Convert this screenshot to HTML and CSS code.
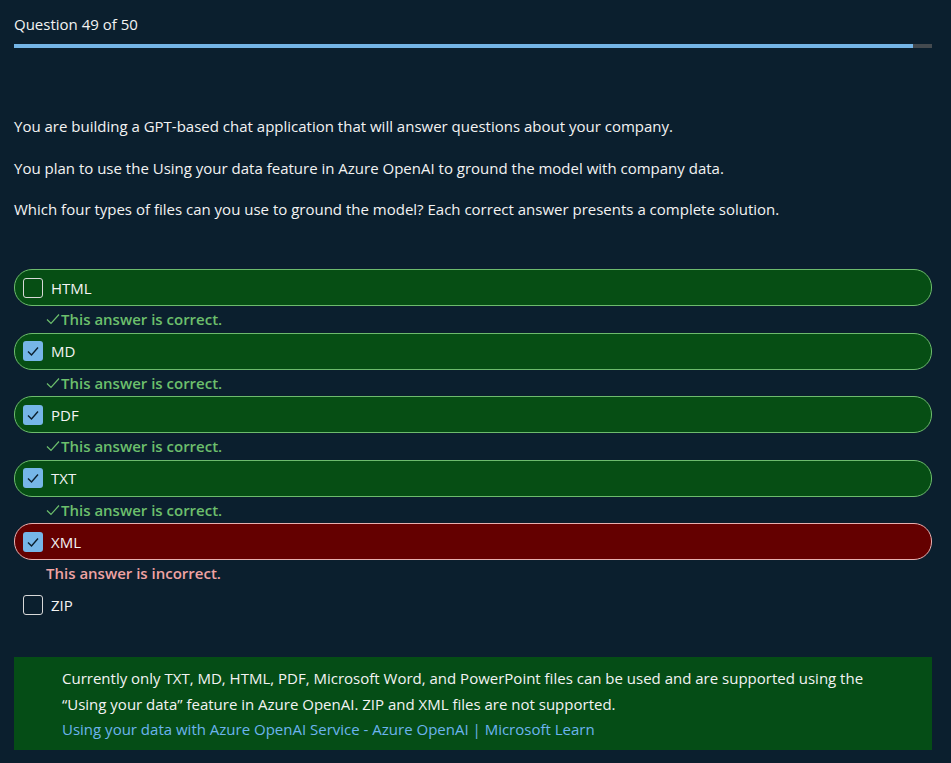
FILE: index.html
```html
<!DOCTYPE html>
<html lang="en">
<head>
<meta charset="utf-8">
<title>Question 49 of 50</title>
<link rel="stylesheet" href="styles.css">
</head>
<body>
<main class="quiz">
  <header class="head">
    <div class="counter">Question 49 of 50</div>
    <div class="progress"><div class="progress-fill" style="width:97.93%"></div></div>
  </header>

  <section class="question">
    <p>You are building a GPT-based chat application that will answer questions about your company.</p>
    <p>You plan to use the Using your data feature in Azure OpenAI to ground the model with company data.</p>
    <p>Which four types of files can you use to ground the model? Each correct answer presents a complete solution.</p>
  </section>

  <ul class="options">
    <li class="opt correct"><span class="box"></span><span class="label">HTML</span></li>
    <li class="fb ok"><svg class="tick" viewBox="0 0 14 12"><path d="M1 6.5 L5 10.5 L13 1.5" fill="none" stroke="currentColor" stroke-width="1.2"/></svg>This answer is correct.</li>
    <li class="opt correct"><span class="box checked"><svg viewBox="0 0 20 20"><path d="M5 10.5 L8.5 14 L15 6.5" fill="none" stroke="#0b1f2e" stroke-width="1.4"/></svg></span><span class="label">MD</span></li>
    <li class="fb ok"><svg class="tick" viewBox="0 0 14 12"><path d="M1 6.5 L5 10.5 L13 1.5" fill="none" stroke="currentColor" stroke-width="1.2"/></svg>This answer is correct.</li>
    <li class="opt correct"><span class="box checked"><svg viewBox="0 0 20 20"><path d="M5 10.5 L8.5 14 L15 6.5" fill="none" stroke="#0b1f2e" stroke-width="1.4"/></svg></span><span class="label">PDF</span></li>
    <li class="fb ok"><svg class="tick" viewBox="0 0 14 12"><path d="M1 6.5 L5 10.5 L13 1.5" fill="none" stroke="currentColor" stroke-width="1.2"/></svg>This answer is correct.</li>
    <li class="opt correct"><span class="box checked"><svg viewBox="0 0 20 20"><path d="M5 10.5 L8.5 14 L15 6.5" fill="none" stroke="#0b1f2e" stroke-width="1.4"/></svg></span><span class="label">TXT</span></li>
    <li class="fb ok"><svg class="tick" viewBox="0 0 14 12"><path d="M1 6.5 L5 10.5 L13 1.5" fill="none" stroke="currentColor" stroke-width="1.2"/></svg>This answer is correct.</li>
    <li class="opt wrong"><span class="box checked"><svg viewBox="0 0 20 20"><path d="M5 10.5 L8.5 14 L15 6.5" fill="none" stroke="#0b1f2e" stroke-width="1.4"/></svg></span><span class="label">XML</span></li>
    <li class="fb bad">This answer is incorrect.</li>
    <li class="opt plain"><span class="box"></span><span class="label">ZIP</span></li>
  </ul>

  <aside class="explain">
    <p>Currently only TXT, MD, HTML, PDF, Microsoft Word, and PowerPoint files can be used and are supported using the “Using your data” feature in Azure OpenAI. ZIP and XML files are not supported.</p>
    <a class="link" href="#">Using your data with Azure OpenAI Service - Azure OpenAI | Microsoft Learn</a>
  </aside>
</main>
</body>
</html>
```
FILE: styles.css
```css
html, body {
  margin: 0;
  padding: 0;
  background: #0b1f2e;
}
body {
  font-family: "Open Sans", "Noto Sans", "Liberation Sans", sans-serif;
  font-size: 15px;
  color: #f3f3f3;
}
.quiz {
  width: 918px;
  padding: 14px 0 0 14px;
}
.counter {
  line-height: 20px;
  height: 20px;
}
.progress {
  margin-top: 10px;
  height: 4px;
  background: #444a4f;
}
.progress-fill {
  height: 100%;
  background: #74b5e6;
}
.question {
  margin-top: 68px;
}
.question p {
  margin: 0 0 21.5px;
  line-height: 20px;
}
.options {
  list-style: none;
  margin: 50px 0 0;
  padding: 0;
}
.opt {
  display: flex;
  align-items: center;
  gap: 8px;
  height: 37px;
  box-sizing: border-box;
  padding: 0 8px;
  border: 1px solid transparent;
  border-radius: 18px;
}
.opt.correct {
  background: #064e14;
  border-color: #6dbb6d;
}
.opt.wrong {
  background: #640000;
  border-color: #e8b0b0;
}
.box {
  width: 20px;
  height: 20px;
  box-sizing: border-box;
  border: 1px solid #d8d8d8;
  border-radius: 3px;
  display: block;
}
.box.checked {
  border: none;
  background: #76b6e8;
}
.box svg {
  width: 20px;
  height: 20px;
  display: block;
}
.label {
  line-height: 20px;
}
.fb {
  height: 26.5px;
  display: flex;
  align-items: center;
  padding-left: 32px;
  font-weight: 600;
}
.fb.ok {
  color: #6cbf6c;
}
.fb.bad {
  color: #f0a3a3;
}
.tick {
  width: 14px;
  height: 12px;
  margin-right: 1px;
}
.explain {
  margin-top: 33px;
  background: #054d16;
  padding: 8px 58px 8px 48px;
}
.explain p {
  margin: 0;
  line-height: 26px;
}
.link {
  display: block;
  line-height: 25px;
  color: #6cb4ee;
  text-decoration: none;
}
```
